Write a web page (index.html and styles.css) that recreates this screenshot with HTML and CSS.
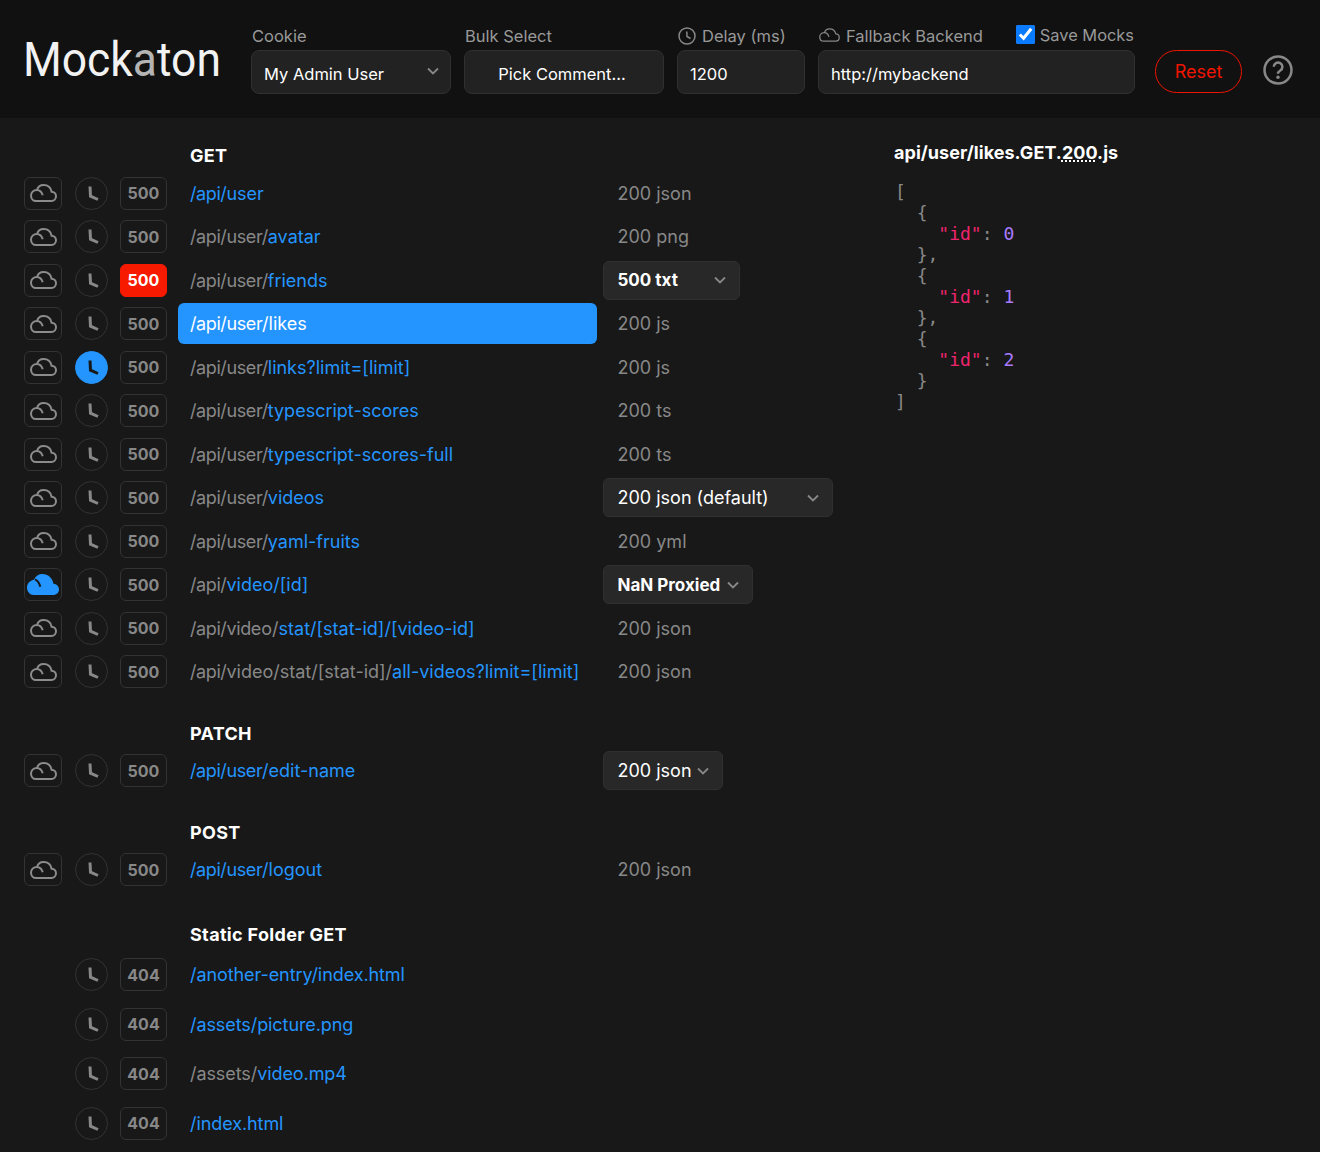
FILE: index.html
```html
<!DOCTYPE html>
<html lang="en">
<head>
    <meta charset="UTF-8"/>
    <title>Mockaton</title>
    <link rel="stylesheet" href="styles.css">
</head>

<body>
<svg class="defs" width="0" height="0">
    <symbol id="cloud" viewBox="0 0 27 18">
        <path d="M6 17H21.500C24 17 26 15 26 12.300 26 9.700 24 7.800 21.600 7.700 20.800 3.700 17.800 1 13.700 1 10.300 1 7.800 3 7 6M12.700 11.300C11.800 8 9.500 6 6.800 6 3.500 6 1 8.500 1 11.500 1 14.700 3.200 17 6 17"/>
    </symbol>
    <symbol id="cloudFill" viewBox="0 0 32 21">
        <path class="fill" d="M6.500 21H26C29.500 21 32 18.500 32 15.500 32 12.300 29.500 10 26.500 9.800 25.500 4 21 0 15.500 0 11.500 0 8.500 2 7 5.800 3 6.300 0 9.700 0 13.500 0 17.700 3 21 6.500 21Z"/>
        <path class="notch" d="M8 5.300C10.500 6.500 12.500 9.500 13.300 12.700"/>
    </symbol>
    <symbol id="clockHand" viewBox="0 0 31 31">
        <path d="M14 8.500 14.500 18.200 22 21.500"/>
    </symbol>
    <symbol id="chevron" viewBox="0 0 12 8">
        <path d="M1 1.500 6 6.500 11 1.500"/>
    </symbol>
</svg>

<header class="top">
    <h1 class="logo">Mock<span class="logoA">a</span>ton</h1>

    <label class="field fieldCookie">
        <span class="fieldLabel">Cookie</span>
        <span class="selectWrap">
            <select class="ctrl"><option>My Admin User</option></select>
            <svg class="chev"><use href="#chevron"/></svg>
        </span>
    </label>

    <label class="field fieldBulk">
        <span class="fieldLabel">Bulk Select</span>
        <select class="ctrl ctrlCenter"><option>Pick Comment…</option></select>
    </label>

    <label class="field fieldDelay">
        <span class="fieldLabel">
            <svg class="labelClock" viewBox="0 0 18 18"><circle cx="9" cy="9" r="8"/><path d="M8.800 4.500 9 9.500 12.500 11.500"/></svg>
            Delay (ms)
        </span>
        <input class="ctrl" type="text" value="1200">
    </label>

    <div class="field fieldBackend">
        <div class="backendLabels">
            <span class="fieldLabel">
                <svg class="labelCloud"><use href="#cloud"/></svg>
                Fallback Backend
            </span>
            <label class="saveMocks">
                <input type="checkbox" checked>
                Save Mocks
            </label>
        </div>
        <input class="ctrl" type="text" value="http://mybackend">
    </div>

    <button class="reset">Reset</button>

    <a class="help" href="#">
        <svg viewBox="0 0 30 30">
            <circle cx="15" cy="15" r="13.500"/>
            <path d="M10.800 11.800a4.300 4.300 0 1 1 6.500 3.700c-1.500 1-2.300 1.700-2.300 3.200"/>
            <circle class="dot" cx="15" cy="22.300" r="1.700"/>
        </svg>
    </a>
</header>

<main class="layout">
    <div class="mocks">
        <section class="group">
            <h2>GET</h2>
            <div class="row">
                <button class="cloudBtn"><svg><use href="#cloud"/></svg></button>
                <button class="clockBtn"><svg><use href="#clockHand"/></svg></button>
                <button class="errBtn">500</button>
                <a class="link" href="#"><span class="api">/api/</span>user</a>
                <span class="status">200 json</span>
            </div>
            <div class="row">
                <button class="cloudBtn"><svg><use href="#cloud"/></svg></button>
                <button class="clockBtn"><svg><use href="#clockHand"/></svg></button>
                <button class="errBtn">500</button>
                <a class="link" href="#"><span class="dim api">/api/user/</span>avatar</a>
                <span class="status">200 png</span>
            </div>
            <div class="row">
                <button class="cloudBtn"><svg><use href="#cloud"/></svg></button>
                <button class="clockBtn"><svg><use href="#clockHand"/></svg></button>
                <button class="errBtn on">500</button>
                <a class="link" href="#"><span class="dim api">/api/user/</span>friends</a>
                <span class="pick w137 strong"><select><option>500 txt</option></select><svg class="chev"><use href="#chevron"/></svg></span>
            </div>
            <div class="row">
                <button class="cloudBtn"><svg><use href="#cloud"/></svg></button>
                <button class="clockBtn"><svg><use href="#clockHand"/></svg></button>
                <button class="errBtn">500</button>
                <a class="link chosen" href="#"><span class="api">/api/use</span>r/likes</a>
                <span class="status">200 js</span>
            </div>
            <div class="row">
                <button class="cloudBtn"><svg><use href="#cloud"/></svg></button>
                <button class="clockBtn on"><svg><use href="#clockHand"/></svg></button>
                <button class="errBtn">500</button>
                <a class="link" href="#"><span class="dim api">/api/user/</span>links?limit=[limit]</a>
                <span class="status">200 js</span>
            </div>
            <div class="row">
                <button class="cloudBtn"><svg><use href="#cloud"/></svg></button>
                <button class="clockBtn"><svg><use href="#clockHand"/></svg></button>
                <button class="errBtn">500</button>
                <a class="link" href="#"><span class="dim api">/api/user/</span>typescript-scores</a>
                <span class="status">200 ts</span>
            </div>
            <div class="row">
                <button class="cloudBtn"><svg><use href="#cloud"/></svg></button>
                <button class="clockBtn"><svg><use href="#clockHand"/></svg></button>
                <button class="errBtn">500</button>
                <a class="link" href="#"><span class="dim api">/api/user/</span>typescript-scores-full</a>
                <span class="status">200 ts</span>
            </div>
            <div class="row">
                <button class="cloudBtn"><svg><use href="#cloud"/></svg></button>
                <button class="clockBtn"><svg><use href="#clockHand"/></svg></button>
                <button class="errBtn">500</button>
                <a class="link" href="#"><span class="dim api">/api/user/</span>videos</a>
                <span class="pick w230"><select><option>200 json (default)</option></select><svg class="chev"><use href="#chevron"/></svg></span>
            </div>
            <div class="row">
                <button class="cloudBtn"><svg><use href="#cloud"/></svg></button>
                <button class="clockBtn"><svg><use href="#clockHand"/></svg></button>
                <button class="errBtn">500</button>
                <a class="link" href="#"><span class="dim api">/api/user/</span>yaml-fruits</a>
                <span class="status">200 yml</span>
            </div>
            <div class="row">
                <button class="cloudBtn on"><svg class="big"><use href="#cloudFill"/></svg></button>
                <button class="clockBtn"><svg><use href="#clockHand"/></svg></button>
                <button class="errBtn">500</button>
                <a class="link" href="#"><span class="dim api">/api/</span>video/[id]</a>
                <span class="pick w150 strong"><select><option>NaN Proxied</option></select><svg class="chev"><use href="#chevron"/></svg></span>
            </div>
            <div class="row">
                <button class="cloudBtn"><svg><use href="#cloud"/></svg></button>
                <button class="clockBtn"><svg><use href="#clockHand"/></svg></button>
                <button class="errBtn">500</button>
                <a class="link" href="#"><span class="dim"><span class="api">/api/vid</span>eo/</span>stat/[stat-id]/[video-id]</a>
                <span class="status">200 json</span>
            </div>
            <div class="row">
                <button class="cloudBtn"><svg><use href="#cloud"/></svg></button>
                <button class="clockBtn"><svg><use href="#clockHand"/></svg></button>
                <button class="errBtn">500</button>
                <a class="link" href="#"><span class="dim"><span class="api">/api/</span>video/stat/[stat-id]/</span>all-videos?limit=[limit]</a>
                <span class="status">200 json</span>
            </div>
        </section>

        <section class="group">
            <h2>PATCH</h2>
            <div class="row">
                <button class="cloudBtn"><svg><use href="#cloud"/></svg></button>
                <button class="clockBtn"><svg><use href="#clockHand"/></svg></button>
                <button class="errBtn">500</button>
                <a class="link" href="#"><span class="api">/api/use</span>r/edit-name</a>
                <span class="pick w120"><select><option>200 json</option></select><svg class="chev"><use href="#chevron"/></svg></span>
            </div>
        </section>

        <section class="group">
            <h2>POST</h2>
            <div class="row">
                <button class="cloudBtn"><svg><use href="#cloud"/></svg></button>
                <button class="clockBtn"><svg><use href="#clockHand"/></svg></button>
                <button class="errBtn">500</button>
                <a class="link" href="#"><span class="api">/api/use</span>r/logout</a>
                <span class="status">200 json</span>
            </div>
        </section>

        <section class="group static">
            <h2>Static Folder GET</h2>
            <div class="row">
                <span class="cloudGap"></span>
                <button class="clockBtn"><svg><use href="#clockHand"/></svg></button>
                <button class="errBtn">404</button>
                <a class="link" href="#">/another-entry/index.html</a>
            </div>
            <div class="row">
                <span class="cloudGap"></span>
                <button class="clockBtn"><svg><use href="#clockHand"/></svg></button>
                <button class="errBtn">404</button>
                <a class="link" href="#">/assets/picture.png</a>
            </div>
            <div class="row">
                <span class="cloudGap"></span>
                <button class="clockBtn"><svg><use href="#clockHand"/></svg></button>
                <button class="errBtn">404</button>
                <a class="link" href="#"><span class="dim">/assets/</span>video.mp4</a>
            </div>
            <div class="row">
                <span class="cloudGap"></span>
                <button class="clockBtn"><svg><use href="#clockHand"/></svg></button>
                <button class="errBtn">404</button>
                <a class="link" href="#">/index.html</a>
            </div>
        </section>
    </div>

    <aside class="preview">
        <h3>api/user/likes.GET.<span class="code200">200</span>.js</h3>
<pre>[
  {
    <span class="key">"id"</span>: <span class="num">0</span>
  },
  {
    <span class="key">"id"</span>: <span class="num">1</span>
  },
  {
    <span class="key">"id"</span>: <span class="num">2</span>
  }
]</pre>
    </aside>
</main>
</body>
</html>
```

FILE: styles.css
```css
* {
    box-sizing: border-box;
}

html, body {
    margin: 0;
    padding: 0;
    height: 1152px;
    overflow: hidden;
}

body {
    background: #181818;
    color: #fff;
    font-family: Inter, "Liberation Sans", sans-serif;
    font-size: 18px;
}

.defs {
    display: block;
    height: 0;
}

button, select, input {
    font: inherit;
    color: inherit;
}

/* Header */
.top {
    display: flex;
    align-items: flex-start;
    height: 118px;
    padding: 0 27px 0 24px;
    background: #111;
}

.logo {
    width: 227px;
    margin: 32px 0 0;
    font-family: Roboto, sans-serif;
    font-size: 48px;
    font-weight: 400;
    line-height: 56px;
    color: #f2f2f2;
    white-space: nowrap;
    transform: translateX(-1px) scaleX(.925);
    transform-origin: 0 0;
}

.logoA {
    color: #b4b4b4;
}

.field {
    display: flex;
    flex-direction: column;
    margin-top: 22px;
    margin-right: 13px;
}

.fieldCookie { width: 200px; }
.fieldBulk { width: 200px; }
.fieldDelay { width: 128px; }
.fieldBackend { width: 317px; margin-right: 20px; }

.fieldLabel {
    display: flex;
    align-items: center;
    gap: 6px;
    height: 28px;
    padding-left: 1px;
    color: #999;
    font-size: 16.500px;
    white-space: nowrap;
}

.labelClock {
    width: 18px;
    height: 18px;
    fill: none;
    stroke: #888;
    stroke-width: 1.500;
}

.labelCloud {
    width: 21px;
    height: 14px;
    margin-bottom: 3px;
    fill: none;
    stroke: #888;
    stroke-width: 1.600;
}

.backendLabels {
    display: flex;
    justify-content: space-between;
    height: 28px;
}

.saveMocks {
    display: flex;
    align-items: center;
    gap: 5px;
    margin: 1px 1px 0 0;
    height: 24px;
    color: #999;
    font-size: 16.400px;
}

.saveMocks input {
    width: 19px;
    height: 19px;
    margin: -1px 0 0;
    accent-color: #0a7aff;
}

.ctrl {
    width: 100%;
    height: 44px;
    padding: 4px 12px 0;
    background: #222;
    border: 1px solid #303030;
    border-radius: 8px;
    color: #fff;
    font-size: 16.500px;
    appearance: none;
    outline: 0;
}

.ctrlCenter {
    padding-right: 16px;
    text-align: center;
}

.selectWrap {
    position: relative;
    display: block;
}

.chev {
    position: absolute;
    top: 50%;
    right: 14px;
    width: 12px;
    height: 8px;
    margin-top: -4px;
    fill: none;
    stroke: #888;
    stroke-width: 1.800;
    pointer-events: none;
}

.selectWrap .chev {
    right: 12px;
    margin-top: -5px;
}

.reset {
    width: 87px;
    height: 43px;
    margin-top: 50px;
    background: none;
    border: 1.500px solid #f01500;
    border-radius: 50px;
    color: #f01500;
    font-size: 18px;
}

.help {
    display: block;
    width: 30px;
    height: 30px;
    margin: 55px 0 0 21px;
}

.help svg {
    display: block;
    fill: none;
    stroke: #888;
    stroke-width: 2.500;
}

.help .dot {
    fill: #888;
    stroke: none;
}

/* Main area */
.layout {
    display: grid;
    grid-template-columns: 894px 1fr;
}

.mocks {
    padding: 26px 0 0 24px;
}

.group {
    margin-bottom: 28px;
}

.group.static {
    margin-top: 31px;
}

.group h2 {
    height: 24px;
    margin: 0 0 3.500px 166px;
    font-size: 18px;
    font-weight: 700;
    line-height: 24px;
    letter-spacing: .33px;
}

.row {
    display: flex;
    align-items: center;
    height: 43.500px;
}

.static .row {
    height: 49.500px;
}

.static .link {
    letter-spacing: -.08px;
}

.cloudBtn, .cloudGap {
    flex: none;
    width: 38px;
    height: 33px;
    margin-right: 13px;
}

.cloudBtn {
    display: flex;
    align-items: center;
    justify-content: center;
    padding: 0;
    background: none;
    border: 1px solid #333;
    border-radius: 6px;
}

.cloudBtn svg {
    width: 27px;
    height: 18px;
    fill: none;
    stroke: #8c8c8c;
    stroke-width: 2;
}

.cloudBtn svg.big {
    width: 32px;
    height: 21px;
    stroke: none;
}

.fill {
    fill: #2495ff;
}

.notch {
    fill: none;
    stroke: #181818;
    stroke-width: 2;
}

.clockBtn {
    flex: none;
    width: 33px;
    height: 33px;
    margin-right: 12px;
    padding: 0;
    background: none;
    border: 1px solid #333;
    border-radius: 50%;
}

.clockBtn svg {
    display: block;
    width: 31px;
    height: 31px;
    fill: none;
    stroke: #888;
    stroke-width: 3;
}

.clockBtn.on {
    background: #2495ff;
    border-color: #2495ff;
}

.clockBtn.on svg {
    stroke: #181818;
}

.errBtn {
    flex: none;
    width: 47px;
    height: 33px;
    margin-right: 11px;
    padding: 0;
    background: none;
    border: 1px solid #333;
    border-radius: 6px;
    color: #888;
    font-size: 16px;
    font-weight: 700;
}

.errBtn.on {
    background: #f81a00;
    border-color: #f81a00;
    color: #fff;
}

.link {
    flex: none;
    width: 419px;
    height: 41px;
    margin-right: 6px;
    padding: 0 12px;
    border-radius: 6px;
    color: #2495ff;
    line-height: 41px;
    text-decoration: none;
    white-space: nowrap;
}

.link.chosen {
    background: #2495ff;
    color: #fff;
}

.dim {
    color: #888;
}

/* the leading path runs a little tighter than the rest */
.api {
    letter-spacing: -.4px;
}

.status {
    padding-left: 14.500px;
    color: #888;
}

.pick {
    position: relative;
    display: block;
    height: 39px;
}

.pick select {
    display: block;
    width: 100%;
    height: 100%;
    padding: 0 13.500px;
    background: #282828;
    border: 1px solid #303030;
    border-radius: 6px;
    appearance: none;
    outline: 0;
}

.pick.strong select {
    font-weight: 700;
    font-size: 17px;
}

.w120 { width: 120px; }
.w137 { width: 137px; }
.w150 { width: 150px; }
.w230 { width: 230px; }

/* Preview */
.preview {
    padding-top: 23px;
}

.preview h3 {
    margin: 0 0 16px;
    font-size: 18px;
    font-weight: 700;
    line-height: 24px;
    letter-spacing: .04px;
}

.code200 {
    text-decoration: underline dotted;
    text-underline-offset: 2px;
}

.preview pre {
    margin: 0 0 0 1px;
    font-family: "DejaVu Sans Mono", monospace;
    font-size: 18px;
    line-height: 21px;
    color: #888;
}

.key {
    color: #f0246e;
}

.num {
    color: #a97bff;
}
```
